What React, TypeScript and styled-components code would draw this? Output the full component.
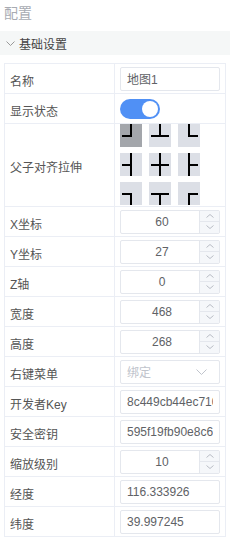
import React from 'react';
import styled, { createGlobalStyle } from 'styled-components';

const Global = createGlobalStyle`
  html, body { margin: 0; padding: 0; background: #fff; }
  body { font-family: "Liberation Sans", "Noto Sans CJK SC", sans-serif; }
  * { box-sizing: border-box; }
`;

const Panel = styled.div`
  width: 230px;
  height: 548px;
  overflow: hidden;
  background: #fff;
`;

const Title = styled.div`
  height: 27px;
  line-height: 27px;
  padding-left: 4px;
  font-size: 14px;
  color: #a8abb2;
  margin-bottom: 4px;
`;

const SectionHead = styled.div`
  height: 24px;
  display: flex;
  align-items: center;
  gap: 4px;
  padding-left: 6px;
  background: #f5f7f7;
  font-size: 12px;
  color: #444;
`;

const Table = styled.div`
  margin: 8px 4px 0;
  border: 1px solid #ebeef5;
  border-bottom: none;
`;

const Row = styled.div<{ $tall?: boolean }>`
  display: grid;
  grid-template-columns: 110px 110px;
  height: ${(p) => (p.$tall ? 83 : 30)}px;
  border-bottom: 1px solid #ebeef5;
`;

const Label = styled.div`
  display: flex;
  align-items: center;
  padding: 3px 0 0 5px;
  border-right: 1px solid #ebeef5;
  font-size: 12px;
  color: #555;
  white-space: nowrap;
`;

const Cell = styled.div<{ $top?: boolean }>`
  display: flex;
  align-items: ${(p) => (p.$top ? 'flex-start' : 'center')};
  padding: 0 5px;
`;

const TextInput = styled.input<{ $center?: boolean }>`
  width: 100%;
  height: 24px;
  margin: 0;
  border: 1px solid #e4e7ed;
  border-radius: 2px;
  padding: ${(p) => (p.$center ? '0 26px 0 10px' : '0 6px')};
  font: inherit;
  font-size: 12px;
  color: #606266;
  text-align: ${(p) => (p.$center ? 'center' : 'left')};
  background: #fff;
  outline: none;
`;

const NumberBox = styled.div`
  position: relative;
  width: 100%;
  height: 24px;
`;

const Spinner = styled.div`
  position: absolute;
  top: 1px;
  right: 1px;
  bottom: 1px;
  width: 20px;
  display: flex;
  flex-direction: column;
  border-left: 1px solid #e4e7ed;
  background: #f5f7fa;
`;

const SpinBtn = styled.div<{ $first?: boolean }>`
  flex: 1;
  display: flex;
  align-items: center;
  justify-content: center;
  border-bottom: ${(p) => (p.$first ? '1px solid #e4e7ed' : 'none')};
`;

const SelectBox = styled.div`
  width: 100%;
  height: 24px;
  display: flex;
  align-items: center;
  justify-content: space-between;
  padding: 0 12px 0 6px;
  border: 1px solid #e4e7ed;
  border-radius: 2px;
  font-size: 12px;
  color: #c0c4cc;
  background: #fff;
`;

const Switch = styled.div<{ $on?: boolean }>`
  position: relative;
  width: 40px;
  height: 20px;
  border-radius: 10px;
  background: ${(p) => (p.$on ? '#5090f5' : '#dcdfe6')};
`;

const Knob = styled.span<{ $on?: boolean }>`
  position: absolute;
  top: 2px;
  left: ${(p) => (p.$on ? 22 : 2)}px;
  width: 16px;
  height: 16px;
  border-radius: 50%;
  background: #fff;
`;

const AlignGrid = styled.div`
  display: grid;
  grid-template-columns: repeat(3, 22px);
  grid-auto-rows: 23px;
  column-gap: 7px;
  row-gap: 6px;
`;

const AlignBtn = styled.div<{ $active?: boolean }>`
  width: 22px;
  height: 23px;
  background: ${(p) => (p.$active ? '#a3a6ab' : '#dcdfe6')};
  display: flex;
`;

type Dir = { u?: boolean; d?: boolean; l?: boolean; r?: boolean };

const AlignIcon = ({ u, d, l, r }: Dir) => (
  <svg width="22" height="23" viewBox="0 0 22 23">
    {u && <line x1="11" y1="0" x2="11" y2="13" stroke="#000" strokeWidth="2" />}
    {d && <line x1="11" y1="11" x2="11" y2="23" stroke="#000" strokeWidth="2" />}
    {l && <line x1="2" y1="12" x2="12" y2="12" stroke="#000" strokeWidth="2" />}
    {r && <line x1="10" y1="12" x2="20" y2="12" stroke="#000" strokeWidth="2" />}
  </svg>
);

const Chevron = ({ up, w, h, color }: { up?: boolean; w: number; h: number; color: string }) => (
  <svg width={w} height={h} viewBox={`0 0 ${w} ${h}`}>
    <polyline
      points={up ? `0.5,${h - 0.5} ${w / 2},0.5 ${w - 0.5},${h - 0.5}` : `0.5,0.5 ${w / 2},${h - 0.5} ${w - 0.5},0.5`}
      fill="none"
      stroke={color}
      strokeWidth="1"
    />
  </svg>
);

const aligns: Dir[] = [
  { u: true, l: true },
  { u: true, l: true, r: true },
  { u: true, r: true },
  { u: true, d: true, l: true },
  { u: true, d: true, l: true, r: true },
  { u: true, d: true, r: true },
  { d: true, l: true },
  { d: true, l: true, r: true },
  { d: true, r: true },
];

const NumField = ({ value }: { value: string }) => (
  <NumberBox>
    <TextInput $center readOnly value={value} />
    <Spinner>
      <SpinBtn $first>
        <Chevron up w={8} h={4} color="#b8bcc4" />
      </SpinBtn>
      <SpinBtn>
        <Chevron w={8} h={4} color="#b8bcc4" />
      </SpinBtn>
    </Spinner>
  </NumberBox>
);

const numRows: [string, string][] = [
  ['X坐标', '60'],
  ['Y坐标', '27'],
  ['Z轴', '0'],
  ['宽度', '468'],
  ['高度', '268'],
];

export default function App() {
  return (
    <Panel>
      <Global />
      <Title>配置</Title>
      <SectionHead>
        <Chevron w={9} h={5} color="#999" />
        <span>基础设置</span>
      </SectionHead>
      <Table>
        <Row>
          <Label>名称</Label>
          <Cell>
            <TextInput readOnly value="地图1" />
          </Cell>
        </Row>
        <Row>
          <Label>显示状态</Label>
          <Cell>
            <Switch $on>
              <Knob $on />
            </Switch>
          </Cell>
        </Row>
        <Row $tall>
          <Label>父子对齐拉伸</Label>
          <Cell $top>
            <AlignGrid>
              {aligns.map((a, i) => (
                <AlignBtn key={i} $active={i === 0}>
                  <AlignIcon {...a} />
                </AlignBtn>
              ))}
            </AlignGrid>
          </Cell>
        </Row>
        {numRows.map(([k, v]) => (
          <Row key={k}>
            <Label>{k}</Label>
            <Cell>
              <NumField value={v} />
            </Cell>
          </Row>
        ))}
        <Row>
          <Label>右键菜单</Label>
          <Cell>
            <SelectBox>
              <span>绑定</span>
              <Chevron w={11} h={6} color="#c0c4cc" />
            </SelectBox>
          </Cell>
        </Row>
        <Row>
          <Label>开发者Key</Label>
          <Cell>
            <TextInput readOnly value="8c449cb44ec710a1b2c3d4e5" />
          </Cell>
        </Row>
        <Row>
          <Label>安全密钥</Label>
          <Cell>
            <TextInput readOnly value="595f19fb90e8c6a7b8c9d0e1" />
          </Cell>
        </Row>
        <Row>
          <Label>缩放级别</Label>
          <Cell>
            <NumField value="10" />
          </Cell>
        </Row>
        <Row>
          <Label>经度</Label>
          <Cell>
            <TextInput readOnly value="116.333926" />
          </Cell>
        </Row>
        <Row>
          <Label>纬度</Label>
          <Cell>
            <TextInput readOnly value="39.997245" />
          </Cell>
        </Row>
      </Table>
    </Panel>
  );
}
